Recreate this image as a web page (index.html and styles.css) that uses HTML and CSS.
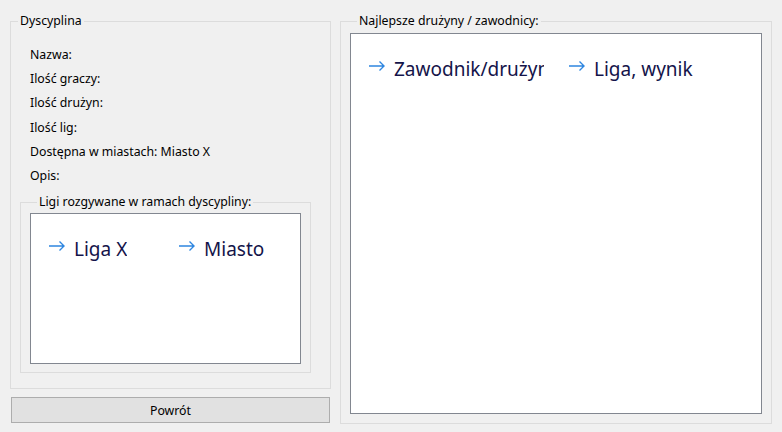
FILE: index.html
```html
<!DOCTYPE html>
<html lang="pl">
<head>
<meta charset="utf-8">
<title>Dyscyplina</title>
<link rel="stylesheet" href="styles.css">
</head>
<body>
<div class="window">
  <div class="left-col">
    <fieldset class="group group-main">
      <legend>Dyscyplina</legend>
      <div class="fields">
        <div class="field">Nazwa:</div>
        <div class="field">Ilość graczy:</div>
        <div class="field">Ilość drużyn:</div>
        <div class="field">Ilość lig:</div>
        <div class="field">Dostępna w miastach: Miasto X</div>
        <div class="field">Opis:</div>
      </div>
      <fieldset class="group group-leagues">
        <legend>Ligi rozgywane w ramach dyscypliny:</legend>
        <div class="list list-leagues">
          <div class="item item-narrow">
            <svg class="arrow" width="16" height="10" viewBox="0 0 16 10"><path d="M0 5H15M10.5 0.5L15 5L10.5 9.5" fill="none" stroke="#2f86e0" stroke-width="1.4"/></svg>
            <span class="item-text">Liga X</span>
          </div>
          <div class="item item-narrow">
            <svg class="arrow" width="16" height="10" viewBox="0 0 16 10"><path d="M0 5H15M10.5 0.5L15 5L10.5 9.5" fill="none" stroke="#2f86e0" stroke-width="1.4"/></svg>
            <span class="item-text">Miasto</span>
          </div>
        </div>
      </fieldset>
    </fieldset>
    <button class="btn">Powrót</button>
  </div>
  <fieldset class="group group-best">
    <legend>Najlepsze drużyny / zawodnicy:</legend>
    <div class="list list-best">
      <div class="item item-wide">
        <svg class="arrow" width="16" height="10" viewBox="0 0 16 10"><path d="M0 5H15M10.5 0.5L15 5L10.5 9.5" fill="none" stroke="#2f86e0" stroke-width="1.4"/></svg>
        <span class="item-text">Zawodnik/drużyna</span>
      </div>
      <div class="item item-wide">
        <svg class="arrow" width="16" height="10" viewBox="0 0 16 10"><path d="M0 5H15M10.5 0.5L15 5L10.5 9.5" fill="none" stroke="#2f86e0" stroke-width="1.4"/></svg>
        <span class="item-text">Liga, wynik</span>
      </div>
    </div>
  </fieldset>
</div>
</body>
</html>
```

FILE: styles.css
```css
html, body {
  margin: 0;
  padding: 0;
  background: #f0f0f0;
}

body {
  font-family: "Noto Sans", "Open Sans", sans-serif;
  font-size: 12.3px;
  color: #000;
}

.window {
  display: flex;
  align-items: flex-start;
  padding: 13px 10px 0 10px;
  gap: 9px;
}

.left-col {
  width: 321px;
  display: flex;
  flex-direction: column;
}

.group {
  margin: 0;
  padding: 0;
  border: 1px solid #dcdcdc;
  box-sizing: border-box;
  min-width: 0;
}

.group > legend {
  margin-left: 7px;
  padding: 0 2px;
  line-height: 16px;
  font-size: 12.3px;
}

.group-main {
  height: 376px;
}

.fields {
  padding: 14px 0 0 19px;
}

.field {
  height: 24.2px;
  line-height: 24.2px;
  white-space: nowrap;
}

.group-leagues {
  margin: 6px 0 0 9px;
  width: 291px;
  height: 179px;
  padding: 3px 0 0 9px;
}

.list {
  background: #fff;
  border: 1px solid #828790;
  box-sizing: border-box;
  display: flex;
  align-items: flex-start;
  padding: 21px 0 0 18px;
}

.list-leagues {
  width: 271px;
  height: 151px;
}

.btn {
  margin: 8px 1px 0 1px;
  height: 26px;
  width: 319px;
  background: #e1e1e1;
  border: 1px solid #adadad;
  font-family: inherit;
  font-size: 12.3px;
  color: #000;
  padding: 0;
}

.group-best {
  width: 432px;
  height: 411px;
  padding: 4px 0 0 9px;
}

.list-best {
  width: 412px;
  height: 381px;
}

.item {
  display: flex;
  align-items: flex-start;
  gap: 9px;
  flex: none;
}

.item-narrow {
  width: 130px;
}

.item-wide {
  width: 200px;
}

.arrow {
  flex: none;
  margin-top: 6px;
}

.item-text {
  font-size: 19px;
  line-height: 28px;
  color: #14144a;
  white-space: nowrap;
  overflow: hidden;
}

.item-wide .item-text {
  max-width: 150px;
}
```
